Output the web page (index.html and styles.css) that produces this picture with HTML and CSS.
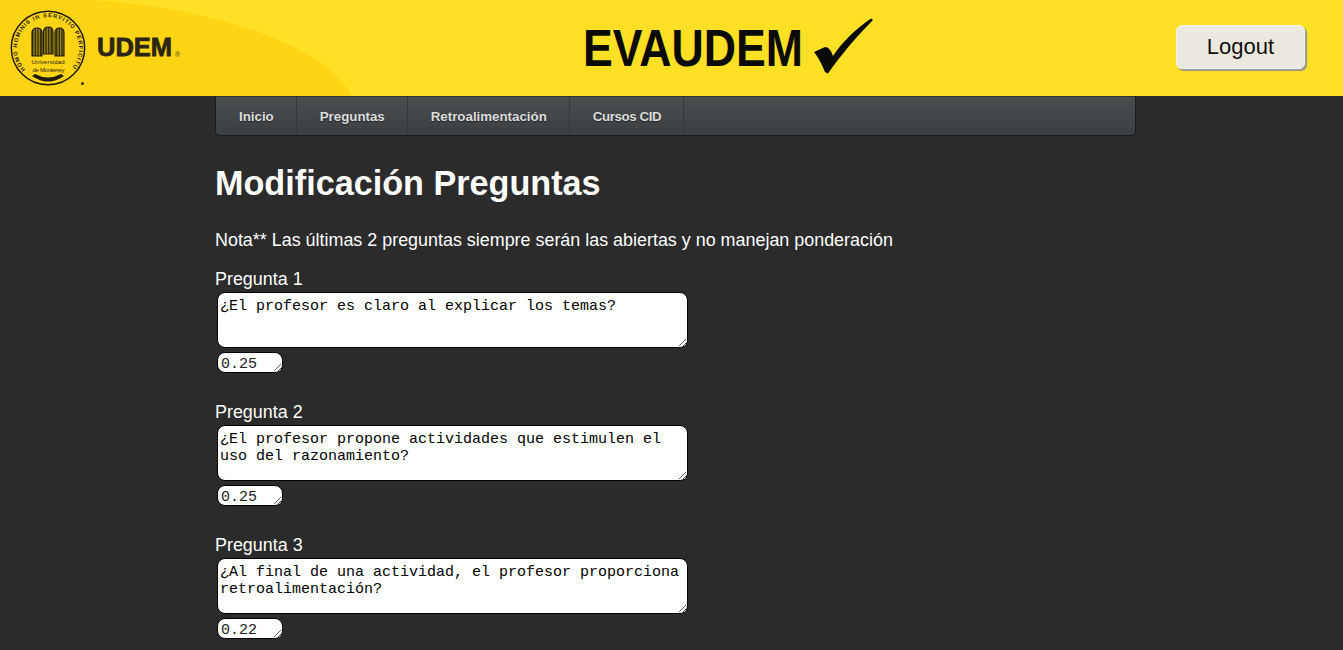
FILE: index.html
```html
<!DOCTYPE html>
<html lang="es">
<head>
<meta charset="utf-8">
<title>EVAUDEM</title>
<link rel="stylesheet" href="styles.css">
</head>
<body>
<header class="header">
  <svg class="header-swoosh" viewBox="0 0 360 96" width="360" height="96" aria-hidden="true"><path d="M0 0H90C170 5 240 22 285 43C318 58 340 75 352 96H0Z" fill="#ffd414"/></svg>
  <div class="brand">
    <svg class="seal" viewBox="0 0 96 96" width="96" height="96">
      <defs>
        <path id="ring" d="M25.500 69.500A31 31 0 1 1 70.500 69.500"/>
        <pattern id="hatch" width="1.600" height="4" patternUnits="userSpaceOnUse"><rect width="1.600" height="4" fill="#a08a1a"/><rect width="0.800" height="4" fill="#2a2408"/></pattern>
      </defs>
      <circle cx="48" cy="48" r="36.700" fill="none" stroke="#1f1a08" stroke-width="1.500"/>
      <text class="seal-ring"><textPath href="#ring" textLength="146">HOMO HOMINIS IN SERVITIO PERFICITUR</textPath></text>
      <path class="book" d="M32 56V33Q32 28 37 28Q42 28 42 33V56Z"/>
      <path class="book" d="M43.500 54V32Q43.500 27 48.500 27Q53 27 53 32V54Z"/>
      <path class="book" d="M55 56V33Q55 28 59.500 28Q64 28 64 33V56Z"/>
      <text class="seal-name" x="31.500" y="64" textLength="33">Universidad</text>
      <text class="seal-name" x="32.500" y="71.500" textLength="32">de Monterrey</text>
      <path d="M32 76Q48 87 64 76L61 74Q48 81 35 74Z" fill="#1f1a08"/>
      <circle cx="82.500" cy="83.500" r="1.500" fill="#3a3312"/>
    </svg>
    <span class="udem">UDEM</span><span class="reg">®</span>
  </div>
  <div class="title">
    <span class="title-text">EVAUDEM</span>
    <svg class="check" viewBox="814 17 62 58" width="62" height="58" aria-hidden="true"><path d="M815 52L826 47Q831 47 834 56C843 42 858 28 872 18.500L874 20C858 36 842 55 829 73.500L826 72C823 65 820 58 815 52Z" fill="#0a0a06"/></svg>
  </div>
  <button class="logout" type="button">Logout</button>
</header>
<main class="page">
  <nav class="nav">
    <a class="nav-item">Inicio</a>
    <a class="nav-item">Preguntas</a>
    <a class="nav-item">Retroalimentación</a>
    <a class="nav-item">Cursos CID</a>
  </nav>
  <h1 class="heading">Modificación Preguntas</h1>
  <p class="note">Nota** Las últimas 2 preguntas siempre serán las abiertas y no manejan ponderación</p>
  <section class="question">
    <label class="question-label">Pregunta 1</label>
    <textarea class="question-text">¿El profesor es claro al explicar los temas?</textarea>
    <textarea class="question-weight">0.25</textarea>
  </section>
  <section class="question">
    <label class="question-label">Pregunta 2</label>
    <textarea class="question-text">¿El profesor propone actividades que estimulen el uso del razonamiento?</textarea>
    <textarea class="question-weight">0.25</textarea>
  </section>
  <section class="question">
    <label class="question-label">Pregunta 3</label>
    <textarea class="question-text">¿Al final de una actividad, el profesor proporciona retroalimentación?</textarea>
    <textarea class="question-weight">0.22</textarea>
  </section>
</main>
</body>
</html>
```
FILE: styles.css
```css
* { box-sizing: border-box; }
html, body { margin: 0; height: 100%; overflow: hidden; }
body {
  background: #2b2b2b;
  color: #fff;
  font-family: "Liberation Sans", Arial, sans-serif;
}
.header {
  position: relative;
  height: 96px;
  background: #ffe024;
  display: grid;
  grid-template-columns: 553px 1fr auto;
  align-items: center;
  padding-right: 38px;
}
.header-swoosh { position: absolute; left: 0; top: 0; }
.brand { position: relative; display: flex; align-items: center; height: 96px; }
.seal { flex: none; }
.seal-ring { font: bold 5.6px "Liberation Sans", sans-serif; fill: #1f1a08; }
.seal-name { font: 6px "Liberation Sans", sans-serif; fill: #2a2510; }
.book { fill: url(#hatch); stroke: #1f1a08; stroke-width: 1.2; }
.udem {
  margin-left: 1px;
  font-size: 25.500px;
  font-weight: 700;
  color: #2b2515;
  -webkit-text-stroke: 0.8px #2b2515;
  line-height: 1;
}
.reg { font-size: 7px; color: #4a4320; margin: 12px 0 0 3px; }
.title { display: flex; align-items: center; padding-left: 30px; height: 96px; }
.title-text {
  display: inline-block;
  font-size: 51px;
  font-weight: 700;
  color: #0a0a06;
  line-height: 1;
  transform: scaleX(0.875);
  transform-origin: left center;
  margin-right: -32px;
}
.check { margin: -4px 0 0 11px; }
.logout {
  width: 129px;
  height: 44px;
  margin-top: -3px;
  background: #ebe8df;
  border: 1px solid #f6f4ee;
  border-radius: 6px;
  box-shadow: 2px 2px 1px #9c9a8e;
  color: #111;
  font: 22px "Liberation Sans", sans-serif;
}
.page { padding-left: 215px; width: 1136px; }
.nav {
  display: flex;
  height: 40px;
  background: linear-gradient(#4b4e4f, #3b3f42);
  border: 1px solid #1c1c1c;
  border-top-color: #333;
  border-radius: 0 0 5px 5px;
}
.nav-item {
  display: flex;
  align-items: center;
  padding: 0 22px 0 23px;
  font-size: 13.300px;
  font-weight: 700;
  color: #dcdcdc;
  text-shadow: 0 1px 1px #222;
  border-right: 1px solid #353839;
}
.nav-item:last-child { letter-spacing: -0.4px; }
.heading { margin: 26px 0 0; font-size: 34.200px; line-height: 42px; font-weight: 700; }
.note { margin: 26px 0 0; font-size: 17.920px; line-height: 21px; }
.question { display: flex; flex-direction: column; align-items: flex-start; height: 133px; }
.note + .question { margin-top: 18px; }
.question-label { font-size: 17.920px; line-height: 21px; }
.question-text, .question-weight {
  display: block;
  margin: 0 0 0 2px;
  padding: 5px 2px 3px;
  background: #fff;
  color: #000;
  border: 1px solid #000;
  border-radius: 8px;
  font: 15px/17px "Liberation Mono", "Courier New", monospace;
}
.question-text { width: 471px; height: 56px; margin-top: 2px; }
.question-weight { width: 66px; height: 21px; margin-top: 4px; padding: 3px 2px 0 3px; overflow: hidden; color: #222; }
```
